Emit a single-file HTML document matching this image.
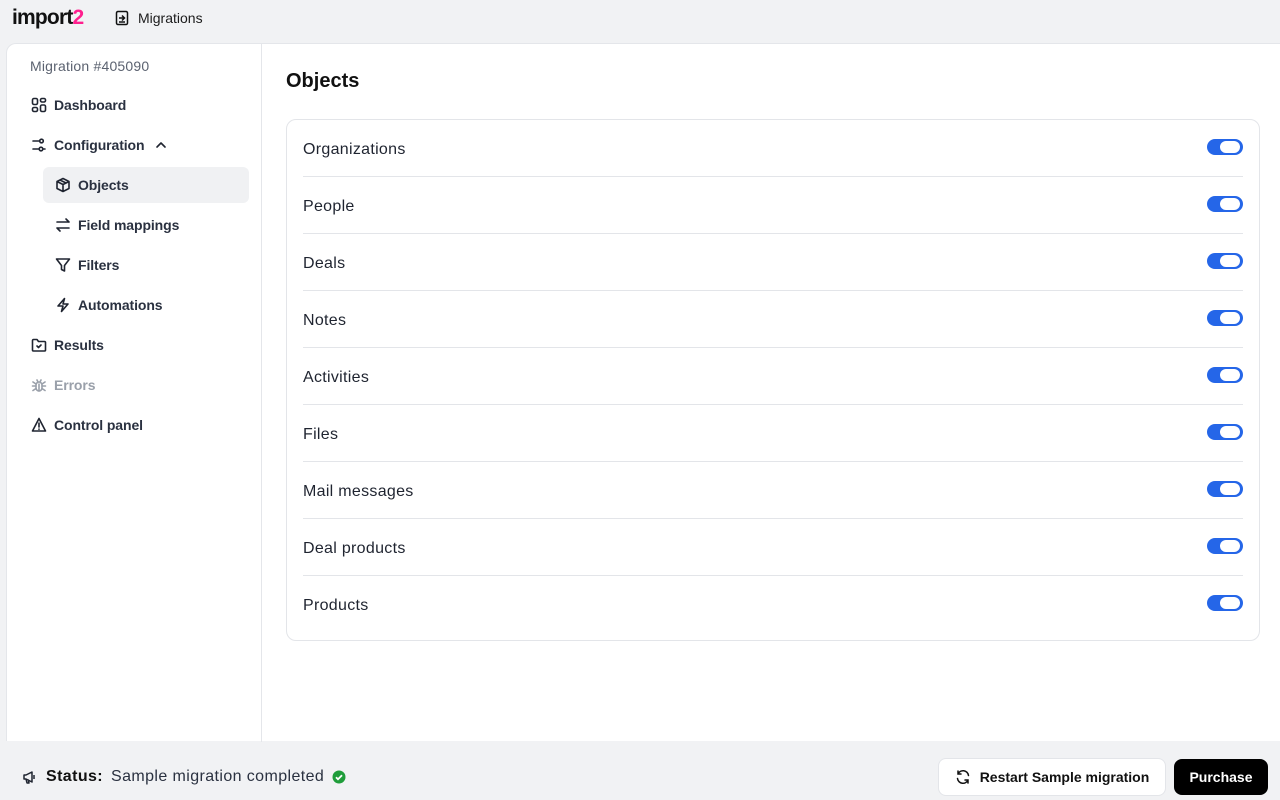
<!DOCTYPE html>
<html><head><meta charset="utf-8"><style>
*{box-sizing:border-box;margin:0;padding:0}
body{width:1280px;height:800px;background:#f1f2f4;font-family:"Liberation Sans",sans-serif;color:#1f2430;position:relative;overflow:hidden}
.top{position:absolute;left:0;top:0;height:42px;width:1280px}
.logo{position:absolute;left:12px;top:6px;font-weight:bold;font-size:21px;letter-spacing:-0.8px;color:#111}
.logo span{color:#ff1f8e}
.mig{position:absolute;left:114px;top:10px;font-size:14px;color:#1c1c1c;display:flex;align-items:center;gap:8px}
.panel{position:absolute;left:6px;top:43px;width:1274px;height:698px;background:#fff;border-top-left-radius:10px;border:1px solid #e4e6ea;border-right:none;border-bottom:none}
.side{position:absolute;left:0;top:0;width:255px;height:698px;border-right:1px solid #e4e6ea}
.side .t{position:absolute;left:23px;top:14px;font-size:14px;color:#5b6270;letter-spacing:0.2px}
.it{position:absolute;height:36px;display:flex;align-items:center;gap:7px;font-size:14px;color:#2a3140;font-weight:bold;letter-spacing:-0.1px}
.it svg{width:16px;height:16px;fill:none;stroke:#1f2430;stroke-width:1.6;stroke-linecap:round;stroke-linejoin:round}
.sel{left:36px;width:206px;background:#f0f1f3;border-radius:6px;padding-left:12px}
h1{position:absolute;left:286px;top:70px;font-size:20px;font-weight:bold;color:#111}
.card{position:absolute;left:286px;top:119px;width:974px;height:522px;border:1px solid #e3e5e9;border-radius:10px;background:#fff}
.row{position:absolute;left:16px;width:940px;height:57px;border-bottom:1px solid #e3e5e9;font-size:16px;color:#1f2430;display:flex;align-items:center;padding-top:3px;letter-spacing:0.3px}
.tg{position:absolute;right:0;top:19px;width:36px;height:16px;border-radius:8px;background:#2566e8}
.tg:after{content:"";position:absolute;right:3px;top:2px;width:20px;height:12px;border-radius:6px;background:#fff}
.status{position:absolute;left:22px;top:768px;font-size:16px;color:#2a3140;display:flex;align-items:center;gap:8px;letter-spacing:0.4px}
.btn1{position:absolute;left:938px;top:758px;width:228px;height:38px;border:1px solid #e3e5e9;border-radius:8px;background:#fff;font-size:14px;font-weight:bold;color:#111;display:flex;align-items:center;justify-content:center;gap:9px}
.btn2{position:absolute;left:1174px;top:759px;width:94px;height:36px;border-radius:8px;background:#000;color:#fff;font-size:14px;font-weight:bold;display:flex;align-items:center;justify-content:center}
</style></head><body>
<div class="top">
<div class="logo">import<span>2</span></div>
<div class="mig"><svg width="16" height="16" viewBox="0 0 16 16" fill="none" stroke="#111" stroke-width="1.5"><rect x="2.5" y="1.5" width="11" height="13" rx="1.5"/><path d="M5 8h5M8 5.5l2.5 2.5L8 10.5M5 12h6"/></svg>Migrations</div>
</div>
<div class="panel">
<div class="side">
<div class="t">Migration #405090</div>
<div class="it" style="left:24px;top:43px"><svg viewBox="0 0 16 16"><rect x="1.5" y="1.5" width="5" height="6" rx="1.5"/><rect x="9.5" y="1.5" width="5" height="3.5" rx="1.5"/><rect x="1.5" y="10.5" width="5" height="4" rx="1.5"/><rect x="9.5" y="8" width="5" height="6.5" rx="1.5"/></svg>Dashboard</div>
<div class="it" style="left:24px;top:83px"><svg viewBox="0 0 16 16"><path d="M2 4h6M12 12h2M2 12h6"/><circle cx="10.5" cy="4" r="1.8"/><circle cx="10" cy="12" r="1.8"/></svg>Configuration <svg viewBox="0 0 16 16" style="margin-left:2px"><path d="M4 10l4-4 4 4"/></svg></div>
<div class="it sel" style="top:123px"><svg viewBox="0 0 16 16"><path d="M8 1.5l6 3v7l-6 3-6-3v-7z M2 4.5l6 3 6-3M8 7.5v7M5 3l6 3"/></svg>Objects</div>
<div class="it" style="left:48px;top:163px"><svg viewBox="0 0 16 16"><path d="M2 5h12M11 2l3 3M14 11H2M5 14l-3-3"/></svg>Field mappings</div>
<div class="it" style="left:48px;top:203px"><svg viewBox="0 0 16 16"><path d="M1.5 2h13L9.5 8.5V14l-3-1.5V8.5z"/></svg>Filters</div>
<div class="it" style="left:48px;top:243px"><svg viewBox="0 0 16 16"><path d="M9.5 1.5L3 9h5l-1.5 5.5L13 7H8z"/></svg>Automations</div>
<div class="it" style="left:24px;top:283px"><svg viewBox="0 0 16 16"><path d="M1.5 3.5a1 1 0 011-1h3.5l1.5 2h6a1 1 0 011 1V13a1 1 0 01-1 1h-11a1 1 0 01-1-1z M6 9l1.5 1.5L10 8"/></svg>Results</div>
<div class="it" style="left:24px;top:323px;color:#9aa0aa"><svg viewBox="0 0 16 16" style="stroke:#9aa0aa"><rect x="5" y="5" width="6" height="9" rx="3"/><path d="M6 3l1 2M10 3l-1 2M1.5 9h3.5M11 9h3.5M2 5l3 2M14 5l-3 2M2 13.5l3-2M14 13.5l-3-2M8 7v7"/></svg>Errors</div>
<div class="it" style="left:24px;top:363px"><svg viewBox="0 0 16 16"><path d="M8 1.5l6.5 12.5h-13z M8 6v4M8 12v.3"/></svg>Control panel</div>
</div>
</div>
<h1>Objects</h1>
<div class="card">
<div class="row" style="top:0">Organizations<div class="tg"></div></div>
<div class="row" style="top:57px">People<div class="tg"></div></div>
<div class="row" style="top:114px">Deals<div class="tg"></div></div>
<div class="row" style="top:171px">Notes<div class="tg"></div></div>
<div class="row" style="top:228px">Activities<div class="tg"></div></div>
<div class="row" style="top:285px">Files<div class="tg"></div></div>
<div class="row" style="top:342px">Mail messages<div class="tg"></div></div>
<div class="row" style="top:399px">Deal products<div class="tg"></div></div>
<div class="row" style="top:456px;border-bottom:none">Products<div class="tg"></div></div>
</div>
<div class="status"><svg width="16" height="16" viewBox="0 0 16 16" fill="none" stroke="#1f2430" stroke-width="1.5" stroke-linejoin="round"><path d="M2 6v4h2l6 3V3L4 6z M4 10l1 4h2l-1-3.5M12 6v4"/></svg><b style="color:#111">Status:</b> Sample migration completed <svg width="14" height="14" viewBox="0 0 14 14"><circle cx="7" cy="7" r="6.5" fill="#1f9d3a"/><path d="M4 7.2l2 2 4-4" stroke="#fff" stroke-width="1.8" fill="none"/></svg></div>
<div class="btn1"><svg width="16" height="16" viewBox="0 0 16 16" fill="none" stroke="#111" stroke-width="1.5" stroke-linecap="round"><path d="M13.5 6.5A5.5 5.5 0 003 5M2.5 9.5A5.5 5.5 0 0013 11M3 2v3h3M13 14v-3h-3"/></svg>Restart Sample migration</div>
<div class="btn2">Purchase</div>
</body></html>
